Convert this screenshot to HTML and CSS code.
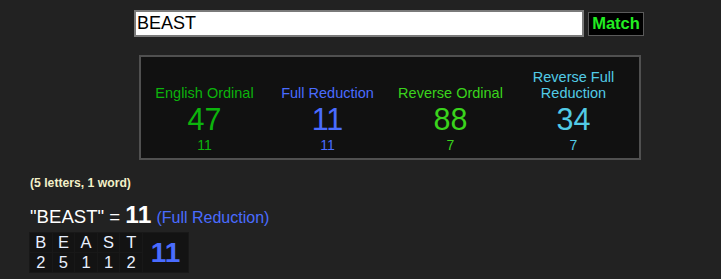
FILE: index.html
```html
<!DOCTYPE html>
<html>
<head>
<meta charset="utf-8">
<link rel="stylesheet" href="styles.css">
</head>
<body>
<div class="search">
  <input class="search-input" type="text" value="BEAST">
  <button class="match-btn">Match</button>
</div>
<div class="results">
  <div class="cipher eo">
    <div class="label">English Ordinal</div>
    <div class="big">47</div>
    <div class="small">11</div>
  </div>
  <div class="cipher fr">
    <div class="label">Full Reduction</div>
    <div class="big">11</div>
    <div class="small">11</div>
  </div>
  <div class="cipher ro">
    <div class="label">Reverse Ordinal</div>
    <div class="big">88</div>
    <div class="small">7</div>
  </div>
  <div class="cipher rfr">
    <div class="label">Reverse Full<br>Reduction</div>
    <div class="big">34</div>
    <div class="small">7</div>
  </div>
</div>
<div class="detail">
  <div class="count">(5 letters, 1 word)</div>
  <div class="equation">"BEAST" = <span class="eq-num">11</span> <span class="eq-cipher">(Full Reduction)</span></div>
  <table class="breakdown">
    <tr>
      <td class="cell">B</td><td class="cell">E</td><td class="cell">A</td><td class="cell">S</td><td class="cell">T</td>
      <td class="total" rowspan="2">11</td>
    </tr>
    <tr>
      <td class="cell">2</td><td class="cell">5</td><td class="cell">1</td><td class="cell">1</td><td class="cell">2</td>
    </tr>
  </table>
</div>
</body>
</html>
```
FILE: styles.css
```css
html, body {
  margin: 0;
  padding: 0;
  background: #222222;
  font-family: "Liberation Sans", Arial, sans-serif;
}

.search {
  display: flex;
  align-items: center;
  padding: 10px 0 0 134px;
  height: 27px;
}

.search-input {
  box-sizing: border-box;
  width: 450px;
  height: 27px;
  margin: 0;
  border: 2px solid #7a7a7a;
  background: #ffffff;
  color: #000000;
  font-family: "Liberation Sans", Arial, sans-serif;
  font-size: 18px;
  padding: 0 1px;
  outline: none;
}

.match-btn {
  box-sizing: border-box;
  margin-left: 4px;
  width: 56px;
  height: 24px;
  padding: 0;
  border: 1px solid #5a5a5a;
  background: #000000;
  color: #22ee22;
  font-family: "Liberation Sans", Arial, sans-serif;
  font-weight: bold;
  font-size: 16.5px;
}

.results {
  box-sizing: border-box;
  margin: 18px 0 0 139px;
  width: 502px;
  height: 105px;
  border: 2px solid #505050;
  background: #111111;
  display: grid;
  grid-template-columns: repeat(4, 1fr);
  align-items: end;
  padding: 0 4px 5px 2px;
}

.cipher {
  text-align: center;
}

.label {
  font-size: 14.5px;
  line-height: 16px;
}

.big {
  font-size: 30.5px;
  line-height: 36px;
}

.small {
  font-size: 14px;
  line-height: 16px;
}

.eo { color: #0cb40c; }
.fr { color: #4a6cff; }
.ro { color: #3ad41c; }
.rfr { color: #52cbe6; }

.detail {
  padding: 16px 0 0 30px;
}

.count {
  color: #f2f0c8;
  font-size: 12.2px;
  font-weight: bold;
  line-height: 14px;
}

.equation {
  margin-top: 12px;
  color: #ffffff;
  font-size: 18.6px;
  line-height: 25px;
}

.eq-num {
  font-weight: bold;
  font-size: 24.5px;
}

.eq-cipher {
  color: #4a6cff;
  font-size: 16px;
}

.breakdown {
  margin-top: 2px;
  border-collapse: separate;
  border-spacing: 1px;
  background: #181818;
  margin-left: -1px;
}

.cell {
  width: 21.6px;
  height: 19px;
  padding: 0;
  text-align: center;
  background: #131313;
  color: #e8f0ff;
  font-size: 16.5px;
  line-height: 19px;
}

.total {
  width: 45px;
  padding: 0;
  text-align: center;
  background: #131313;
  color: #4a6cff;
  font-weight: bold;
  font-size: 28px;
}
```
